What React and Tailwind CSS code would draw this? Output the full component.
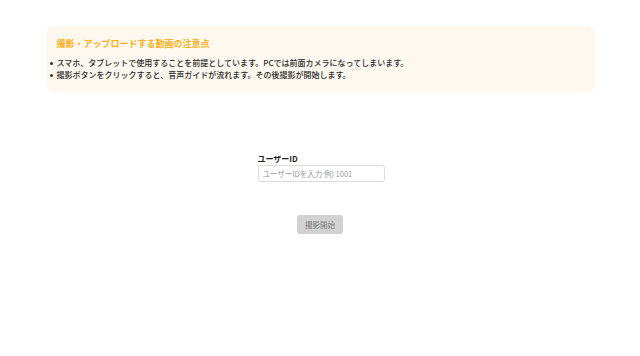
export default function App() {
  return (
    <div
      className="min-h-[356px] w-full bg-white text-[#333]"
      style={{ fontFamily: '"Noto Sans CJK JP", "Noto Sans", sans-serif' }}
    >
      <div className="pt-[26px]">
        {/* Notice */}
        <div className="mx-auto w-[549px] rounded-[8px] bg-[#fff8ef] px-[11px] pt-[11px] pb-[11px]">
          <h2 className="text-[9px] font-bold leading-[14px] text-[#f8b020]">
            撮影・アップロードする動画の注意点
          </h2>
          <ul className="mt-[6px] text-[8px] font-medium leading-[12px] text-[#2a2a2a]">
            <li className="flex items-center">
              <span className="ml-[-7px] mr-[4px] inline-block h-[3px] w-[3px] rounded-full bg-[#333]"></span>
              スマホ、タブレットで使用することを前提としています。PCでは前面カメラになってしまいます。
            </li>
            <li className="flex items-center">
              <span className="ml-[-7px] mr-[4px] inline-block h-[3px] w-[3px] rounded-full bg-[#333]"></span>
              撮影ボタンをクリックすると、音声ガイドが流れます。その後撮影が開始します。
            </li>
          </ul>
        </div>

        {/* Form */}
        <div className="mx-auto mt-[61px] flex w-[127px] flex-col translate-x-[1px]">
          <label className="text-[8px] font-bold leading-[12px] text-[#222]">
            ユーザーID
          </label>
          <input
            type="text"
            placeholder="ユーザーIDを入力 例) 1001"
            className="h-[17px] w-full rounded-[3px] border border-[#dcdcdc] bg-white px-[4px] text-[7.5px] text-[#333] placeholder:text-[#999] focus:outline-none"
          />
        </div>
        <div className="mt-[33px] flex justify-center">
          <button className="h-[19px] w-[46px] rounded-[3px] bg-[#d2d2d2] text-[7.5px] text-[#808080]">
            撮影開始
          </button>
        </div>
      </div>
    </div>
  );
}
